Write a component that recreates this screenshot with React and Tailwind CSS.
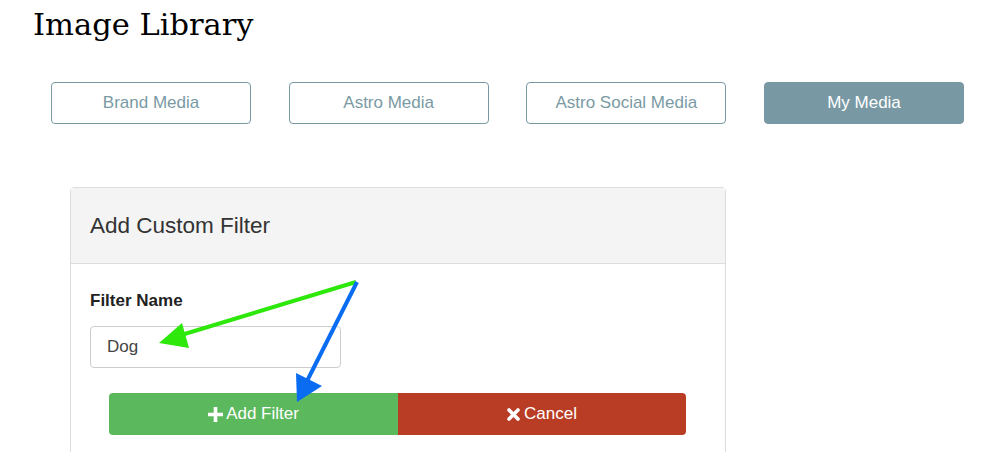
export default function App() {
  const tabs = ["Brand Media", "Astro Media", "Astro Social Media", "My Media"];
  const active = "My Media";

  return (
    <div className="relative w-[985px] h-[452px] overflow-hidden bg-white" style={{ fontFamily: '"Liberation Sans", Arial, sans-serif' }}>
      {/* titulo */}
      <h1 className="pl-[33px] pt-[6px] h-[82px] text-[30.5px] leading-[38px] text-black" style={{ fontFamily: '"DejaVu Serif", serif' }}>
        Image Library
      </h1>

      {/* pestañas */}
      <div className="ml-[51px] w-[913px] flex justify-between">
        {tabs.map((t) =>
          t === active ? (
            <button key={t} className="w-[200px] h-[42px] rounded-[4px] border border-[#7899a4] bg-[#7899a4] text-white text-[17px]">
              {t}
            </button>
          ) : (
            <button key={t} className="w-[200px] h-[42px] rounded-[4px] border border-[#7899a4] bg-white text-[#7a9aa4] text-[17px]">
              {t}
            </button>
          )
        )}
      </div>

      {/* panel */}
      <div className="ml-[70px] mt-[63px] w-[656px] border border-[#dddddd] rounded-t-[4px]">
        <div className="h-[76px] bg-[#f4f4f4] border-b border-[#dddddd] px-[19px] flex items-center">
          <span className="text-[22.5px] text-[#333333]">Add Custom Filter</span>
        </div>
        <div className="px-[19px] pt-[26px] pb-5">
          <label className="block text-[17px] font-bold text-[#222222] leading-[22px]">Filter Name</label>
          <div className="mt-[14px] w-[251px] h-[42px] border border-[#cccccc] rounded-[4px] flex items-center px-4 text-[17px] text-[#444444]">
            Dog
          </div>
          <div className="mt-[25px] ml-[19px] w-[577px] flex h-[42px]">
            <button className="w-[289px] rounded-l-[4px] bg-[#5cb85c] text-white text-[17px] flex items-center justify-center gap-[3px]">
              <svg width="15" height="15" viewBox="0 0 14 14">
                <path d="M5.3 0h3.4v5.3H14v3.4H8.7V14H5.3V8.7H0V5.3h5.3z" fill="white" />
              </svg>
              Add Filter
            </button>
            <button className="flex-1 rounded-r-[4px] bg-[#b93d25] text-white text-[17px] flex items-center justify-center gap-[4px]">
              <svg width="13" height="13" viewBox="0 0 13 13">
                <path d="M2 2L11 11M11 2L2 11" stroke="white" strokeWidth="3.6" strokeLinecap="round" />
              </svg>
              Cancel
            </button>
          </div>
        </div>
      </div>

      {/* flechas de anotación */}
      <svg className="absolute left-0 top-0 pointer-events-none" width="985" height="452">
        <line x1="356" y1="282" x2="178" y2="336" stroke="#2ee80c" strokeWidth="4" />
        <polygon points="159,343 182,323 189,348" fill="#2ee80c" />
        <line x1="357" y1="282" x2="305" y2="385" stroke="#0a6cf0" strokeWidth="4" />
        <polygon points="297,402 296,373 322,386" fill="#0a6cf0" />
      </svg>
    </div>
  );
}
